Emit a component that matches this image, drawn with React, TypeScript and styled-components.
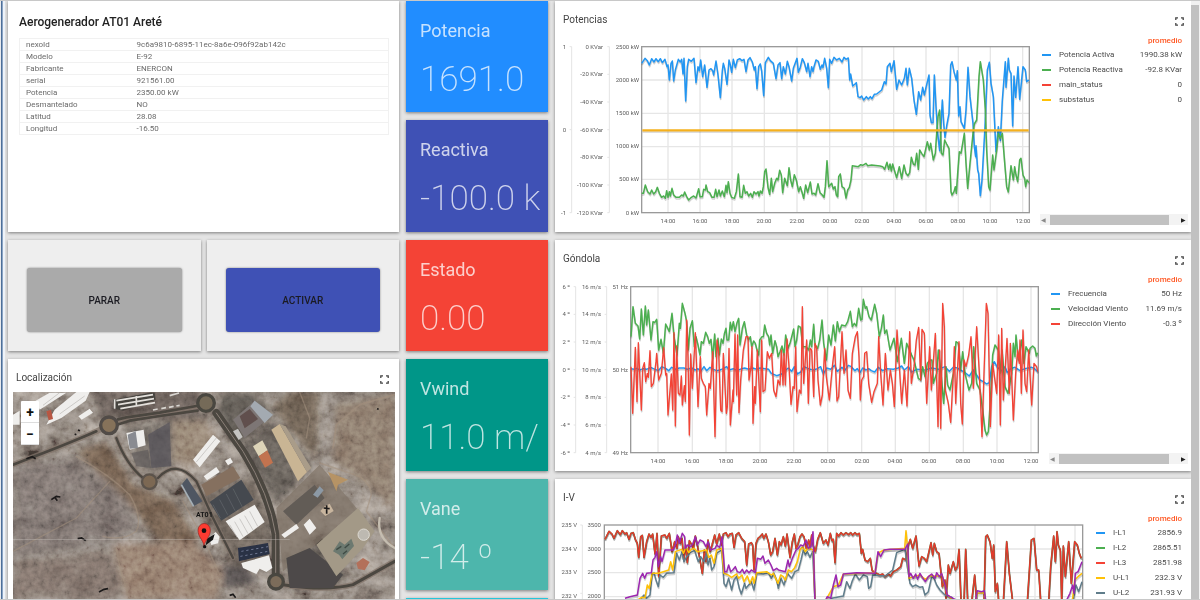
import React from 'react';
import styled, { createGlobalStyle } from 'styled-components';

const GlobalStyle = createGlobalStyle`
  * { box-sizing: border-box; }
  body { margin: 0; background: #e4e4e4; font-family: Roboto, "Liberation Sans", sans-serif; color: #3c3c3c; }
  h1, h2, p { margin: 0; font-weight: 400; }
  button { font: inherit; cursor: pointer; }
  table { border-collapse: collapse; }
`;

const Frame = styled.div`
  display: flex;
  height: 100vh;
  overflow: hidden;
  border-top: 1px solid #c8c8c8;
  border-bottom: 1px solid #c8c8c8;
`;

const Rail = styled.div`
  flex: 0 0 8px;
  background: linear-gradient(90deg, #e8eaee 0 1px, #4d6f98 1px 2px, #8ba4c4 2px 3px, #eef3f9 3px 5px, #e2e2e2 5px 8px);
`;

const Dashboard = styled.main`
  flex: 1;
  min-width: 0;
  display: grid;
  grid-template-columns: 391fr 142fr 636fr;
  grid-template-rows: 111px 112px 111px 112px 111px 112px;
  grid-auto-flow: column;
  gap: 8px 7px;
`;

const Card = styled.section<{ $row: string; $col: number }>`
  grid-row: ${p => p.$row};
  grid-column: ${p => p.$col};
  min-width: 0;
  background: #fff;
  box-shadow: 0 1px 3px rgba(0, 0, 0, 0.45);
`;

const AssetCard = styled(Card)`
  padding: 13px 10px 0 11px;
`;

const AssetTitle = styled.h1`
  font-size: 12px;
  line-height: 16px;
  font-weight: 500;
  color: #222;
`;

const AssetTable = styled.table`
  width: 100%;
  margin-top: 8px;
  border: 1px solid #f1f1f1;
  font-size: 8px;
  line-height: 10px;
  color: #6a6a6a;
  th, td { height: 12px; padding: 0; border-bottom: 1px solid #f1f1f1; text-align: left; font-weight: 400; }
  th { width: 117px; padding-left: 6px; }
`;

const Actions = styled.div`
  grid-row: 3;
  grid-column: 1;
  display: grid;
  grid-template-columns: 1fr 1fr;
  gap: 6px;
`;

const ActionCard = styled.div`
  padding: 28px 19px 19px;
  display: flex;
  background: #eee;
  box-shadow: 0 1px 3px rgba(0, 0, 0, 0.45);
`;

const ActionButton = styled.button<{ $bg: string }>`
  flex: 1;
  border: 0;
  border-radius: 3px;
  background: ${p => p.$bg};
  color: #1b1b22;
  font-size: 10px;
  font-weight: 500;
  box-shadow: 0 0 2px rgba(0, 0, 0, 0.5);
`;

const Tile = styled.section<{ $bg: string }>`
  grid-column: 2;
  padding: 18px 6px 0 14px;
  background: ${p => p.$bg};
  box-shadow: 0 1px 3px rgba(0, 0, 0, 0.45);
  color: rgba(255, 255, 255, 0.75);
  overflow: hidden;
`;

const TileTitle = styled.h2`
  font-size: 18px;
  line-height: 24px;
`;

const TileValue = styled.p`
  margin-top: 13px;
  font-size: 35px;
  line-height: 48px;
  font-weight: 200;
  white-space: pre;
  overflow: hidden;
`;

const PanelHead = styled.header<{ $tall?: boolean }>`
  display: flex;
  justify-content: space-between;
  height: ${p => (p.$tall ? 36 : 33)}px;
  padding: ${p => (p.$tall ? '12px 7px 0 8px' : '12px 10px 0 8px')};
`;

const PanelTitle = styled.h2`
  font-size: 10px;
  line-height: 14px;
  color: #444;
`;

const ExpandButton = styled.button`
  width: 9px;
  height: 9px;
  margin-top: 4px;
  padding: 0;
  border: 0;
  background: none;
  svg { display: block; }
`;

const ChartBody = styled.div<{ $plot: number; $legend: number }>`
  display: grid;
  grid-template-columns: ${p => p.$plot}fr ${p => p.$legend}fr;
  svg { display: block; width: 100%; }
`;

const LegendPane = styled.div`
  display: flex;
  flex-direction: column;
  justify-content: space-between;
  min-width: 0;
  padding: 0 3px 1px 0;
`;

const Legend = styled.table`
  width: 100%;
  margin-top: -3px;
  font-size: 8px;
  white-space: nowrap;
  color: #4a4a4a;
  td, th { padding: 0; height: 15px; line-height: 10px; font-weight: 400; text-align: left; }
  thead th { height: 13px; color: #ff5722; font-weight: 500; }
  th:last-child, td:last-child { text-align: right; padding-right: 6px; }
`;

const SwatchCell = styled.td`
  width: 19px;
`;

const Swatch = styled.i<{ $color: string }>`
  display: block;
  width: 9px;
  height: 2px;
  margin-left: 2px;
  background: ${p => p.$color};
`;

const HScroll = styled.div`
  display: flex;
  align-items: center;
  height: 11px;
  background: #f3f3f3;
`;

const HThumb = styled.div`
  flex: 1;
  height: 10px;
  background: #c1c1c1;
`;

const Arrow = styled.span<{ $wide?: boolean; $dim?: boolean }>`
  width: ${p => (p.$wide ? 19 : 10)}px;
  padding-right: ${p => (p.$wide ? 2 : 4)}px;
  font-size: 6px;
  line-height: 10px;
  text-align: right;
  color: ${p => (p.$dim ? '#8a8a8a' : '#222')};
`;

const PageScroll = styled.div`
  flex: 0 0 9px;
  padding: 4px 1px 0 0;
  background: #f1f1f1;
`;

const PageThumb = styled.div`
  height: 100%;
  background: #c1c1c1;
`;

const MapArea = styled.div`
  position: relative;
  margin: 0 4px 0 5px;
  overflow: hidden;
  svg { display: block; width: 100%; }
`;

const ZoomBox = styled.div`
  position: absolute;
  top: 9px;
  left: 8px;
  display: grid;
  width: 18px;
  background: #fff;
  border-radius: 1px;
`;

const ZoomButton = styled.button`
  height: 22px;
  padding: 0;
  border: 0;
  border-bottom: 1px solid #ddd;
  background: none;
  color: #111;
  font-size: 14px;
  line-height: 20px;
  font-weight: 700;
`;

const BLUE = '#2196f3';
const GREEN = '#4caf50';
const RED = '#f44336';
const AMBER = '#ffc107';
const PURPLE = '#9c27b0';
const SLATE = '#607d8b';

const Expand = ({ label }: { label: string }) => (
  <ExpandButton type="button" aria-label={`Ampliar ${label}`}>
    <svg width="9" height="9" viewBox="0 0 9 9" fill="none" stroke="#444" strokeWidth="1.3">
      <path d="M.8 3V.8H3M6 .8h2.2V3M8.2 6v2.2H6M3 8.2H.8V6" />
    </svg>
  </ExpandButton>
);

type Series = { color: string; points: string; width?: number };
type Axis = { x: number; line?: number; labels: string[] };

type ChartProps = {
  title: string;
  row: string;
  plot: number;
  legend: number;
  shift: number;
  box: [number, number, number, number];
  step: number;
  axes: Axis[];
  ticksX: number[];
  gridY: number[];
  series: Series[];
  entries: [string, string, string][];
};

const HOURS = ['14:00', '16:00', '18:00', '20:00', '22:00', '00:00', '02:00', '04:00', '06:00', '08:00', '10:00', '12:00'];

/* Plot data is stored at three units per pixel, with its origin left of the panel. */
const Chart = ({ title, row, plot, legend, shift, box, step, axes, ticksX, gridY, series, entries }: ChartProps) => {
  const [x0, y0, x1, y1] = box;
  return (
    <Card $row={row} $col={3}>
      <PanelHead $tall>
        <PanelTitle>{title}</PanelTitle>
        <Expand label={title} />
      </PanelHead>
      <ChartBody $plot={plot} $legend={legend}>
        <svg viewBox={`0 0 ${plot} 189`} role="img" aria-label={title}>
          <g transform={`translate(-5 ${shift}) scale(.33333)`} fill="none">
            {ticksX.map(x => <path key={x} d={`M${x} ${y0}V${y1}`} stroke="#e6e6e6" strokeWidth="4" />)}
            {gridY.map(y => <path key={y} d={`M${x0} ${y}H${x1}`} stroke="#e6e6e6" strokeWidth="4" />)}
            {axes.map((a, i) => a.line && (
              <path key={i} d={`M${a.line} ${y0}V${y1}` + a.labels.map((_, k) => `M${a.line! - 6} ${y0 + k * (y1 - y0) / (a.labels.length - 1)}h6`).join('')} stroke="#e4e4e4" strokeWidth="3" />
            ))}
            <rect x={x0} y={y0} width={x1 - x0} height={y1 - y0} stroke="#9a9a9a" strokeWidth="4" />
            {series.map((s, i) => (
              <g key={i} strokeLinejoin="round">
                <polyline points={s.points} transform="translate(1 5)" stroke="#000" strokeOpacity=".18" strokeWidth="5" />
                <polyline points={s.points} stroke={s.color} strokeWidth={s.width || 4.5} />
              </g>
            ))}
          </g>
          <g fontSize="6" fill="#5c5c5c" textAnchor="end">
            {axes.map((a, i) => a.labels.map((t, k) => (
              <text key={`${i}-${k}`} x={a.x} y={Math.round((y0 + k * (step || (y1 - y0) / (a.labels.length - 1))) / 3 + shift + 2)}>{t}</text>
            )))}
          </g>
          {y1 < 700 && (
            <g fontSize="6" fill="#5c5c5c" textAnchor="middle">
              {ticksX.map((x, i) => <text key={x} x={Math.round(x / 3) - 5} y={Math.round(y1 / 3 + shift) + 10}>{HOURS[i]}</text>)}
            </g>
          )}
        </svg>
        <LegendPane>
          <Legend>
            <thead><tr><th colSpan={3}>promedio</th></tr></thead>
            <tbody>
              {entries.map(([name, value, color]) => (
                <tr key={name}>
                  <SwatchCell><Swatch $color={color} /></SwatchCell>
                  <td>{name}</td>
                  <td>{value}</td>
                </tr>
              ))}
            </tbody>
          </Legend>
          <HScroll>
            <Arrow $dim>◀</Arrow>
            <HThumb />
            <Arrow $wide>▶</Arrow>
          </HScroll>
        </LegendPane>
      </ChartBody>
    </Card>
  );
};

/* Joins two recorded stretches; the second one starts 960 units further on. */
const join = (a: string, b: string) =>
  a + ' ' + b.split(' ').map(p => { const [x, y] = p.split(','); return `${Number(x) + 960},${y}`; }).join(' ');

const activePower = join(
  '275,190 285,175 292,182 298,195 305,176 312,186 318,176 325,185 331,176 337,188 345,178 351,200 354,195 358,240 363,190 367,183 371,243 376,210 385,178 391,186 395,178 399,222 402,175 407,303 412,200 416,178 424,184 432,175 438,248 444,200 448,212 452,180 458,230 464,195 471,262 477,210 483,206 488,212 491,225 498,183 504,225 511,293 517,212 520,190 524,205 531,253 537,180 541,195 545,217 550,178 556,203 562,180 569,176 576,182 582,178 588,215 594,180 600,173 607,186 613,210 616,200 621,266 626,200 631,192 635,213 641,287 646,188 655,172 661,182 670,190 678,236 684,195 690,188 695,236 700,200 706,222 712,184 717,200 725,243 730,205 741,175 745,217 750,205 757,176 763,188 770,215 774,190 780,230 785,200 789,215 792,200 798,180 805,184 811,208 816,195 819,203 824,175 830,205 835,263 839,178 845,190 852,172 860,180 868,175 876,186 882,172 888,178 895,174 899,240 902,222 908,258 915,252 919,248 924,290 930,293 935,288 941,300 949,290 955,297 961,290',
  '6,296 13,283 20,282 35,270 43,245 48,252 52,200 60,190 64,215 72,182 80,268 87,240 95,255 103,235 108,205 112,255 118,205 125,235 132,300 139,343 146,275 152,300 158,262 163,285 168,262 177,225 180,345 184,368 189,368 193,225 198,320 203,400 209,452 217,300 221,370 225,412 230,378 237,340 242,195 246,185 252,215 259,240 262,212 266,348 270,320 273,365 283,385 288,330 294,202 300,290 309,370 313,440 317,470 318,437 323,510 326,520 331,587 336,540 345,380 352,210 358,187 363,250 370,290 378,455 385,380 391,422 397,300 406,185 408,262 415,175 418,210 423,220 428,378 432,228 437,292 444,200 449,298 459,200 466,210 470,245 477,240');

const reactivePower = join(
  '275,580 280,580 286,555 293,575 300,582 305,570 311,582 317,575 322,562 328,580 335,592 341,588 346,595 350,572 354,592 358,575 361,588 366,565 371,585 378,592 388,592 395,585 400,588 404,576 410,590 416,600 424,592 431,588 438,594 446,566 450,590 457,590 461,568 466,570 468,555 473,575 479,578 486,592 492,592 497,568 501,590 507,570 511,588 517,573 523,590 528,556 531,578 535,545 540,580 545,592 553,595 559,575 565,522 570,590 576,592 581,556 586,580 591,575 596,588 602,580 607,592 612,575 618,582 624,575 627,588 631,573 636,580 640,560 644,515 648,507 654,562 659,583 664,535 668,575 674,550 680,535 684,540 689,511 694,525 698,578 704,535 712,557 717,503 722,540 727,560 733,524 739,540 746,575 751,560 757,580 761,595 767,555 773,578 781,546 786,582 792,580 797,585 804,551 810,578 815,583 822,592 826,560 831,482 836,560 845,550 850,567 855,560 859,585 863,590 866,530 871,522 876,560 883,565 888,594 893,570 898,562 903,540 907,497 925,500 932,494 938,496 948,490 953,497',
  '5,495 30,498 38,500 44,508 51,487 56,508 60,492 64,513 68,492 73,510 80,533 88,500 95,535 102,495 108,520 114,527 119,518 124,472 130,492 135,495 140,460 145,508 149,450 155,460 162,470 172,425 178,450 182,430 190,480 196,460 200,400 204,350 209,330 214,460 219,465 224,420 230,432 237,445 243,575 246,585 252,575 256,560 259,580 263,520 268,455 273,460 283,400 288,490 293,565 300,490 309,400 313,372 320,360 327,230 331,185 340,240 346,330 350,450 356,560 360,570 368,465 372,510 380,450 385,400 391,415 397,400 405,500 410,560 415,576 423,497 430,540 434,500 438,525 443,545 449,480 453,475 459,525 464,535 467,560 471,540 477,548');

const windDirection = join(
  '243,380 248,520 256,322 261,485 265,308 274,510 278,385 283,368 287,425 292,400 295,412 300,332 304,440 310,430 318,365 320,340 326,420 334,400 341,323 347,405 350,400 354,525 364,402 368,510 372,278 376,558 380,318 385,460 390,465 394,408 397,495 403,437 406,485 410,240 414,350 418,585 422,342 427,445 436,278 444,500 451,350 454,415 460,430 466,440 470,525 477,430 481,445 488,335 495,590 501,300 506,335 512,510 516,515 520,340 524,420 529,520 532,500 537,325 541,555 549,450 550,485 555,282 560,465 563,285 567,518 572,420 580,330 588,290 594,290 597,420 603,380 606,320 609,550 614,440 616,490 622,330 631,515 635,300 639,455 645,450 652,335 658,355 665,340 671,450 678,470 684,420 690,435 694,330 699,435 702,340 706,435 711,297 717,380 723,493 729,440 733,445 737,320 741,515 748,450 753,460 757,200 761,430 770,300 775,490 780,325 785,330 791,470 795,310 800,325 804,420 811,495 817,465 824,325 829,410 838,480 847,380 854,320 861,483 866,470 876,275 882,400 888,330 894,450 901,475 907,340 916,290 922,275 927,350 931,480 935,420 941,410 944,340 950,335 956,430',
  '5,487 12,455 22,430 26,290 32,400 39,495 46,340 54,450 61,390 67,430 73,500 81,270 88,380 95,490 103,390 111,498 119,275 124,430 132,380 139,300 146,262 152,420 156,268 163,280 170,490 179,320 184,450 196,280 204,560 209,330 212,565 218,190 223,260 226,450 235,490 242,547 250,400 253,320 257,490 267,305 272,490 277,552 282,360 288,380 296,345 303,290 310,445 320,260 328,400 336,590 341,430 349,190 354,220 361,560 368,370 380,460 386,285 391,555 395,265 400,480 411,295 418,460 421,310 430,540 437,400 443,330 448,370 450,300 454,460 459,270 465,430 470,455 476,330 485,495 492,370 500,380 503,395');

const windSpeed = join(
  '243,290 249,200 256,250 264,258 269,297 274,207 280,285 286,198 290,255 295,210 303,300 309,245 314,248 320,238 326,330 333,298 340,340 347,252 352,262 358,275 366,220 372,290 381,345 388,250 391,265 397,190 405,220 409,240 415,330 420,265 427,242 433,320 438,290 444,315 450,345 454,305 460,310 467,277 473,290 478,310 483,298 488,355 494,282 498,350 504,295 508,345 514,297 519,310 523,282 528,265 531,300 536,300 541,247 545,270 550,245 555,275 561,248 566,235 570,315 577,265 583,245 590,285 596,300 601,290 605,320 611,303 616,310 621,330 626,345 629,300 636,290 640,290 644,255 650,280 656,290 659,315 663,285 668,340 675,302 680,320 684,350 690,335 696,318 702,345 707,285 714,325 720,310 731,267 735,320 740,300 745,258 752,262 758,320 768,320 776,330 781,300 785,320 791,253 795,315 803,325 809,300 816,240 821,310 829,360 836,285 843,315 850,255 856,303 862,245 868,275 875,255 886,258 893,245 901,214 907,260 913,250 919,258 926,205 932,240 936,238 940,178 946,205 950,200 957,230',
  '4,240 14,193 20,220 28,290 34,265 40,225 44,280 50,270 60,330 72,295 82,365 94,295 103,370 110,310 125,345 132,360 145,415 152,420 158,380 165,410 172,370 180,360 186,360 190,430 200,400 205,330 213,400 221,490 228,380 233,435 240,450 250,400 258,305 265,310 272,390 278,335 285,400 297,450 305,430 311,320 320,430 330,450 338,510 345,570 350,585 355,575 363,450 368,345 375,315 385,330 390,400 396,330 405,440 414,460 425,400 430,310 435,350 438,285 445,360 455,300 462,370 468,320 478,340 480,325 488,318 495,325 499,348 503,338');

const frequency = join(
  '243,386 252,388 260,385 270,390 280,386 290,388 302,382 315,388 325,392 335,380 348,386 356,392 365,382 378,388 388,384 402,384 412,388 425,384 436,390 444,386 452,394 462,380 470,392 480,382 490,388 500,392 510,390 520,386 530,380 537,390 550,386 562,392 575,386 584,384 596,388 608,384 620,388 630,384 645,386 656,388 664,400 680,407 695,402 705,392 715,384 725,394 733,380 742,402 752,396 762,380 780,388 790,390 802,386 812,380 820,402 830,384 842,388 854,376 862,394 876,382 884,392 895,376 904,380 915,392 922,386 930,398 938,384 948,390 956,386',
  '4,392 14,396 25,382 38,392 50,386 70,388 85,384 95,378 103,390 115,380 125,396 140,388 165,390 185,384 205,388 225,380 238,394 250,382 262,384 275,392 285,398 298,408 310,390 322,408 330,420 340,425 350,432 358,428 365,380 373,365 382,382 395,392 405,380 412,398 422,386 435,382 450,392 465,386 485,382 494,386 503,395');

const current = join(
  '165,208 177,184 186,192 192,205 202,182 211,194 217,182 225,192 230,188 237,208 243,190 250,188 256,208 262,220 266,262 272,200 277,196 282,262 290,215 297,192 303,202 308,192 315,252 321,190 326,320 334,198 345,195 350,205 358,190 366,245 374,215 381,235 385,200 391,220 396,205 401,270 407,225 412,278 418,212 424,222 430,235 436,198 442,225 450,270 457,310 463,240 468,275 474,210 480,245 486,225 494,195 500,222 508,192 514,225 520,192 528,188 534,200 540,192 547,190 552,232 558,195 566,188 575,205 584,215 590,285 596,222 604,218 608,225 612,300 618,220 624,205 630,200 637,192 641,205 648,192 655,215 662,255 668,245 675,205 682,255 688,215 693,225 700,200 706,228 711,192 716,230 720,262 727,215 733,192 738,235 743,225 750,200 756,192 762,200 769,235 776,210 780,230 785,195 790,228 796,245 803,208 811,188 820,220 828,210 834,225 841,190 846,212 850,208 855,278 860,190 866,198 873,188 880,195 888,188 896,194 902,188 908,195 915,188 921,194 928,190 934,250 938,238 945,270 953,275',
  '1,265 6,300 15,310 20,310 30,315 38,312 45,320 55,312 62,318 70,305 80,300 92,290 98,265 108,270 115,225 121,208 128,235 138,198 147,288 155,260 163,265 170,275 183,218 188,255 193,220 200,245 207,250 217,350 225,330 228,385 235,285 240,310 250,275 256,300 262,290 267,238 273,395 282,395 287,238 293,395 305,395 314,315 320,395 342,395 347,200 352,195 360,215 367,265 371,225 376,365 382,340 386,395 400,395 410,215 418,310 428,395 472,395 484,210 492,205 500,300 506,300 512,395 536,395 542,290 551,198 556,275 561,185 565,225 571,240 575,395 580,228 586,320 596,215 604,340 614,215 622,225 628,250 634,265');

const voltage3 = join(
  '225,385 240,380 262,375 270,325 278,310 284,325 290,310 304,308 309,270 315,262 320,245 325,290 332,260 336,275 345,240 370,240 376,225 382,195 388,220 397,190 404,200 406,235 413,225 421,230 428,222 436,200 442,225 450,210 460,215 468,230 474,215 482,240 495,235 500,225 509,232 516,200 524,305 530,305 536,285 542,305 548,300 556,290 562,305 570,308 577,298 583,310 590,300 597,308 604,300 616,308 622,265 632,268 639,258 645,280 655,270 663,285 670,302 680,295 686,300 694,302 706,305 714,270 718,290 727,265 738,240 745,235 752,225 760,228 768,210 775,235 783,230 789,185 795,400 822,400 832,380 842,385 850,345 858,315 864,350 872,345 880,312 920,308',
  '15,310 24,245 32,260 42,240 60,238 105,238 113,222 117,320 122,310 130,325 137,312 143,328 150,310 157,322 166,335 175,320 185,312 195,325 200,308 208,320 215,310 225,345 232,375 240,380 255,388 265,400 315,400 322,362 335,365 343,362 348,400 585,400 600,370 608,345 612,370 616,310 624,305 636,275');

const voltage1 = join(
  '255,395 275,382 285,383 292,345 298,355 306,310 325,310 340,305 356,300 362,275 368,300 376,245 395,238 400,250 408,232 416,248 424,238 432,235 442,245 470,240 476,262 484,255 492,280 500,240 515,235 522,310 535,315 545,322 560,312 566,325 576,315 582,335 592,318 600,340 608,320 612,340 620,308 650,305 664,315 670,310 677,325 684,340 692,315 700,320 706,330 715,300 724,305 733,295 742,275 750,240 758,230 766,245 773,235 790,240 795,400 822,400 850,350 865,345 880,312',
  '15,308 24,249 42,240 104,235 108,182 113,240 117,325 130,320 150,315 166,328 178,318 208,318 215,312 232,375 260,400 315,400 322,370 343,368 348,400 600,400 608,385 614,330 624,320 636,310');

const voltage2 = join(
  '260,400 282,375 290,385 300,375 306,315 312,308 318,330 325,350 330,315 340,322 350,310 372,308 380,250 388,270 396,245 402,275 410,260 420,248 434,242 445,275 452,260 462,275 470,250 474,285 480,265 485,300 492,290 500,250 515,240 522,340 528,350 536,325 545,360 552,330 560,320 568,355 574,372 584,340 588,355 596,345 604,335 612,360 620,310 640,312 655,308 664,325 672,310 680,330 685,355 693,325 702,345 712,310 725,325 735,305 745,300 753,270 760,240 766,255 772,245 780,262 788,245 795,400 830,400 845,385 880,378 890,335 900,355 906,335 916,312 928,330 940,315 952,320 956,355',
  '2,350 8,315 45,318 68,300 80,248 105,238 112,290 120,340 128,350 137,345 150,352 158,350 165,375 175,365 185,320 192,325 200,345 210,360 225,375 245,382 260,400 600,400 610,390 618,345 626,365 636,335');

const SatelliteMap = () => (
  <svg viewBox="40 22 1146 621" role="img" aria-label="Vista aérea">
    <defs>
      <filter id="terrain" x="0" y="0" width="100%" height="100%">
        <feTurbulence type="fractalNoise" baseFrequency=".014 .018" numOctaves="6" seed="8" />
        <feColorMatrix values="1.2 0 0 0 -.2  1.15 0 0 0 -.2  1.05 0 0 0 -.18  0 0 0 0 1" />
      </filter>
      <filter id="grain" x="0" y="0" width="100%" height="100%">
        <feTurbulence type="fractalNoise" baseFrequency=".06" numOctaves="3" seed="3" />
        <feColorMatrix values="1.3 0 0 0 -.2  1.3 0 0 0 -.2  1.3 0 0 0 -.2  0 0 0 0 1" />
      </filter>
      <filter id="soft"><feGaussianBlur stdDeviation="10" /></filter>
      <filter id="edge"><feGaussianBlur stdDeviation="1.5" /></filter>
    </defs>
    <rect x="40" y="22" width="1146" height="621" fill="#7d6e63" />
    <rect x="40" y="22" width="1146" height="621" filter="url(#terrain)" opacity=".5" />
    <g filter="url(#soft)" opacity=".65">
      <path d="M40 240L220 215L400 350L420 440L330 480L40 520z" fill="#736b68" />
      <path d="M230 200L320 175L400 300L520 350L600 470L480 470L380 350z" fill="#624b39" />
      <path d="M340 480L580 470L670 560L650 643H380z" fill="#937462" />
      <path d="M520 110L620 110L650 160L580 250L520 230z" fill="#937d69" />
      <path d="M870 22H960L950 220L900 170L820 70z" fill="#5d5041" />
      <path d="M1010 60L1185 30V380L1100 300L1000 230z" fill="#857160" />
      <path d="M40 530L340 500L370 643H40z" fill="#75665f" />
      <path d="M280 22H600V110H300z" fill="#554c46" />
      <path d="M670 25H760L820 90L710 185L650 90z" fill="#44423e" />
      <path d="M720 190L820 110L940 240L830 360z" fill="#4b4743" />
      <path d="M370 130L520 110L520 250L440 260z" fill="#5d5853" />
      <path d="M580 330L760 280L820 420L800 560L700 540z" fill="#5b534b" />
      <path d="M860 520L960 480L1040 580L990 610H870z" fill="#48443f" />
      <path d="M660 550L730 540L780 590L680 610z" fill="#302e32" />
    </g>
    <rect x="40" y="22" width="1146" height="621" filter="url(#grain)" opacity=".22" style={{ mixBlendMode: 'overlay' }} />
    <g fill="none" strokeLinejoin="round" strokeLinecap="round" filter="url(#edge)">
      <g stroke="#82746a" strokeWidth="17" opacity=".75">
        <path d="M40 240Q200 180 290 140L328 122M355 110L380 102L480 88L590 68M650 85L730 200Q810 330 828 450V560M850 600Q980 620 1060 600L1185 530" />
        <path d="M350 160Q380 240 430 280M475 280Q530 220 590 290L640 400L700 520" strokeWidth="13" />
      </g>
      <g stroke="#4c4641" strokeWidth="9">
        <path d="M40 240Q200 180 290 140M355 104L380 98L480 84L590 64M352 120L390 108L480 94L594 78" strokeWidth="8" />
        <path d="M650 85L730 200Q810 330 828 450V565" strokeWidth="24" />
        <path d="M850 600Q980 620 1060 600L1185 530" />
        <path d="M350 160Q380 240 430 280M475 280Q530 220 590 290L640 400L700 520" strokeWidth="7" />
      </g>
      <path d="M650 85L730 200Q810 330 828 450V565" stroke="#8b8178" strokeWidth="3" />
      <circle cx="328" cy="122" r="25" stroke="#514b46" strokeWidth="10" fill="#86725a" />
      <circle cx="619" cy="55" r="25" stroke="#4a4640" strokeWidth="10" fill="#756b58" />
      <circle cx="449" cy="291" r="22" stroke="#5b534c" strokeWidth="7" fill="#7c6853" />
      <circle cx="829" cy="591" r="22" stroke="#4a4640" strokeWidth="10" fill="#7b6c5a" />
      <path d="M230 215Q330 270 390 330Q430 400 410 440Q370 470 310 455M960 235L1050 265Q1110 280 1115 330L1100 380L1185 490M550 350L620 480L660 570M40 500L230 400L330 290M350 490Q360 560 390 640M900 22L930 100L920 160" stroke="#a28f7d" strokeWidth="4" opacity=".55" />
      <path d="M1140 400Q1130 460 1185 490" stroke="#c5bdb0" strokeWidth="7" />
      <path d="M1185 30L1080 60L1010 120L1000 190" stroke="#a08d7c" strokeWidth="5" opacity=".7" />
    </g>
    <g filter="url(#edge)">
      <path d="M850 560L1075 375L960 240L830 370z" fill="#82766a" opacity=".75" />
      <path d="M850 380L945 300L975 340L890 420z" fill="#625c57" />
      <path d="M860 520L930 490L1030 570L1000 610H870z" fill="#4d4a48" />
      <path d="M950 480L1075 370L1125 440L1090 490L1010 575z" fill="#a39987" />
      <path d="M1000 500l20-30 15 10 20-18 8 22-35 40-10-14z" fill="#6c796f" />
      <path d="M1010 495l15-10M1035 490l14-12M1030 508l12-10" stroke="#3f4b45" strokeWidth="4" />
      <circle cx="1092" cy="450" r="17" fill="#bdb9b1" stroke="#dedad2" strokeWidth="3" />
      <path d="M1070 535l20-15 20 12-15 25-20-5z" fill="#b3705a" />
      <g fill="#efeeec">
        <path d="M108 48L150 24H200L120 75zM165 75L230 22H270L258 48L185 100L140 120zM236 95L270 72L280 84L246 105zM40 90L60 78V120H40z" />
        <path d="M580 225L640 150L662 170L600 248zM612 275L650 247L660 262L622 287zM678 410L765 360L795 412L720 467zM912 420L930 402L950 430L930 450z" />
        <path d="M725 535L808 512L818 550L800 562L780 552L770 568L730 550zM380 145L432 135L438 182L390 195zM676 228l16-9 8 14-15 9z" />
        <path d="M845 450L890 418L898 430L855 460zM628 460l20-18 12 14-5 20-20 5z" />
      </g>
      <path d="M384 150L408 140L415 190L390 192z" fill="#898b91" />
      <g stroke="#b9b7b3" strokeWidth="2"><path d="M690 420l22 38M705 411l25 45M720 402l25 45M735 393l25 43M750 380l24 45M590 232l60-72M130 62l50-38M180 88l75-54" /></g>
      <path d="M340 45L450 24H465L468 45L370 78L345 72z" fill="#47443f" />
      <path d="M350 48l110-18M355 60l108-18M362 72l104-18M345 44v28M410 34v28" stroke="#e3e0db" strokeWidth="5" fill="none" />
      <path d="M460 76l14-3M485 72l14-3M508 68l14-3M530 64l10-2M510 33l28-8" stroke="#d8d5d0" strokeWidth="5" fill="none" />
      <path d="M700 105L765 48L820 90L735 160z" fill="#7d7674" />
      <path d="M765 48L820 90L795 115L752 65z" fill="#a3aab1" />
      <path d="M720 95l30-22 25 30-40 28z" fill="#60504d" />
      <path d="M700 140l15-8 14 25-12 9z" fill="#c5c4c2" />
      <path d="M815 135L840 118L922 262L895 290z" fill="#c9b594" />
      <path d="M840 118L858 125L935 250L922 262z" fill="#a99c89" />
      <path d="M760 185l28-18 16 30-27 18z" fill="#ddd4b8" />
      <path d="M777 215l26-18 17 37-24 15z" fill="#c2734f" />
      <path d="M445 150L510 112L515 245L455 250z" fill="#55525a" opacity=".7" />
      <path d="M395 205L445 195L455 250L410 245z" fill="#615d5b" opacity=".7" />
      <path d="M605 300L700 245L722 280L620 335z" fill="#85705f" />
      <path d="M630 352L725 285L762 345L665 408z" fill="#45494f" />
      <path d="M640 360l22 40M660 345l24 45M680 328l26 50M700 312l28 55" stroke="#5a5e63" strokeWidth="3" />
      <path d="M545 300L562 280L608 350L582 365z" fill="#505762" />
      <path d="M545 300L582 365" stroke="#a5afb6" strokeWidth="5" />
      <path d="M715 490L805 475L810 508L718 530z" fill="#293044" />
      <path d="M725 500l80-14M722 515l84-15" stroke="#6e7790" strokeWidth="3" strokeDasharray="7 8" />
      <path d="M985 262L1045 285L1015 300L1010 320z" fill="#b69365" />
      <path d="M940 330l20-25 12 12-18 22z" fill="#8c99a5" />
      <path d="M975 365l15-8 12 22-25 15-15-15z" fill="#c8b59e" />
      <path d="M140 80l14-5 6 28-13 4z" fill="#b85643" />
    </g>
    <g fill="none" stroke="#1c1a1a" strokeWidth="5">
      <path d="M80 222l18-6 10 6M155 345l15-10 12 2M165 338l8 10M234 462l12-2 12 8M298 622l15-8 12-2M225 148l5 2M235 136l6 2M690 632l10-3 8 10M972 370l18 2M981 362v25M1132 72l5 2" />
    </g>
    <path d="M40 465H870" stroke="#d0cbc7" strokeWidth="2" opacity=".6" />
    <path d="M618 482L622 462L645 448L640 465z" fill="#161616" />
    <path d="M613 484C610 464 595 458 595 437A18 20 0 0 1 632 437C632 458 617 464 613 484z" fill="#fc3b31" stroke="#8d241f" strokeWidth="2" />
    <circle cx="613" cy="438" r="7" fill="#111" />
    <circle cx="615" cy="486" r="5" fill="#111" />
    <text x="614" y="398" fontSize="21" fontWeight="700" fill="#161616" textAnchor="middle">AT01</text>
  </svg>
);

const ASSET: [string, string][] = [
  ['nexoId', '9c6a9810-6895-11ec-8a6e-096f92ab142c'],
  ['Modelo', 'E-92'],
  ['Fabricante', 'ENERCON'],
  ['serial', '921561.00'],
  ['Potencia', '2350.00 kW'],
  ['Desmantelado', 'NO'],
  ['Latitud', '28.08'],
  ['Longitud', '-16.50'],
];

const TILES: [string, string, string][] = [
  ['Potencia', '1691.0', '#218dff'],
  ['Reactiva', '-100.0 k', '#3f51b5'],
  ['Estado', '0.00', '#f44336'],
  ['Vwind', '11.0 m/', '#009688'],
  ['Vane', '-14 º', '#4db6ac'],
  ['', '', '#26c6da'],
];

export default function App() {
  return (
    <>
      <GlobalStyle />
      <Frame>
        <Rail />
        <Dashboard>
          <AssetCard $row="1 / 3" $col={1}>
            <AssetTitle>Aerogenerador AT01 Areté</AssetTitle>
            <AssetTable>
              <tbody>
                {ASSET.map(([k, v]) => <tr key={k}><th scope="row">{k}</th><td>{v}</td></tr>)}
              </tbody>
            </AssetTable>
          </AssetCard>

          <Actions>
            <ActionCard><ActionButton type="button" $bg="#aaa">PARAR</ActionButton></ActionCard>
            <ActionCard><ActionButton type="button" $bg="#3f51b5">ACTIVAR</ActionButton></ActionCard>
          </Actions>

          <Card $row="4 / 7" $col={1}>
            <PanelHead>
              <PanelTitle>Localización</PanelTitle>
              <Expand label="Localización" />
            </PanelHead>
            <MapArea>
              <SatelliteMap />
              <ZoomBox>
                <ZoomButton type="button" aria-label="Acercar">+</ZoomButton>
                <ZoomButton type="button" aria-label="Alejar">−</ZoomButton>
              </ZoomBox>
            </MapArea>
          </Card>

          {TILES.map(([name, value, bg]) => (
            <Tile key={bg} $bg={bg}>
              {name && <TileTitle>{name}</TileTitle>}
              {value && <TileValue>{value}</TileValue>}
            </Tile>
          ))}

          <Chart
            title="Potencias" row="1 / 3" plot={485} legend={151} shift={-37} step={0}
            box={[275, 140, 1438, 638]}
            axes={[
              { x: 11, line: 65, labels: ['1', '0', '-1'] },
              { x: 48, line: 178, labels: ['0 KVar', '-20 KVar', '-40 KVar', '-60 KVar', '-80 KVar', '-100 KVar', '-120 KVar'] },
              { x: 84, labels: ['2500 kW', '2000 kW', '1500 kW', '1000 kW', '500 kW', '0 kW'] },
            ]}
            ticksX={[354, 450, 546, 643, 741, 839, 936, 1031, 1128, 1225, 1321, 1418]}
            gridY={[240, 340, 440, 538]}
            series={[
              { color: BLUE, points: activePower },
              { color: GREEN, points: reactivePower },
              { color: '#f5b01d', points: '277,391 1436,391', width: 7 },
            ]}
            entries={[['Potencia Activa', '1990.38 kW', BLUE], ['Potencia Reactiva', '-92.8 KVar', GREEN], ['main_status', '0', RED], ['substatus', '0', AMBER]]}
          />
          <Chart
            title="Góndola" row="3 / 5" plot={494} legend={142} shift={-36} step={0}
            box={[242, 140, 1465, 638]}
            axes={[
              { x: 15, line: 77, labels: ['6 º', '4 º', '2 º', '0 º', '-2 º', '-4 º', '-6 º'] },
              { x: 46, line: 170, labels: ['16 m/s', '14 m/s', '12 m/s', '10 m/s', '8 m/s', '6 m/s', '4 m/s'] },
              { x: 73, labels: ['51 Hz', '50 Hz', '49 Hz'] },
            ]}
            ticksX={[324, 427, 528, 630, 731, 833, 935, 1036, 1138, 1240, 1341, 1443]}
            gridY={[]}
            series={[{ color: BLUE, points: frequency }, { color: GREEN, points: windSpeed }, { color: RED, points: windDirection, width: 4 }]}
            entries={[['Frecuencia', '50 Hz', BLUE], ['Velocidad Viento', '11.69 m/s', GREEN], ['Dirección Viento', '-0.3 º', RED]]}
          />
          <Chart
            title="I-V" row="5 / 7" plot={539} legend={97} shift={-45} step={71}
            box={[163, 165, 1598, 780]}
            axes={[
              { x: 22, line: 97, labels: ['235 V', '234 V', '233 V', '232 V'] },
              { x: 46, labels: ['3500', '3000', '2500', '2000'] },
            ]}
            ticksX={[262, 379, 500, 618, 740, 858, 975, 1097, 1217, 1335, 1455, 1575]}
            gridY={[237, 308, 380]}
            series={[
              { color: '#5f7f4a', points: current, width: 5 },
              { color: '#e5392c', points: current, width: 4 },
              { color: SLATE, points: voltage2 },
              { color: AMBER, points: voltage1 },
              { color: PURPLE, points: voltage3 },
            ]}
            entries={[['I-L1', '2856.9', BLUE], ['I-L2', '2865.51', GREEN], ['I-L3', '2851.98', RED], ['U-L1', '232.3 V', AMBER], ['U-L2', '231.93 V', SLATE]]}
          />
        </Dashboard>
        <PageScroll><PageThumb /></PageScroll>
      </Frame>
    </>
  );
}
